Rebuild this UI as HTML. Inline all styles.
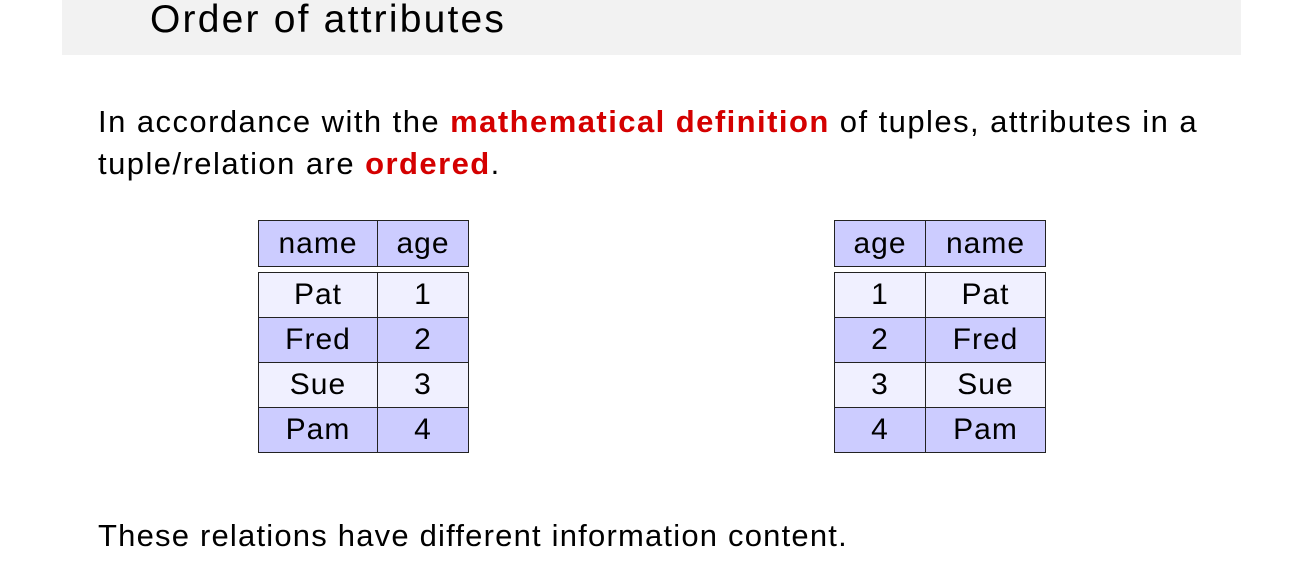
<!DOCTYPE html>
<html><head><meta charset="utf-8"><style>
body{margin:0;width:1296px;height:563px;background:#fff;position:relative;overflow:hidden;font-family:"Liberation Sans",sans-serif;color:#000}
.hdr{position:absolute;left:62px;top:0;width:1179px;height:55px;background:#f2f2f2}
.title{position:absolute;left:150px;top:-2px;font-size:39px;letter-spacing:2.2px;white-space:nowrap}
.t{position:absolute;left:98px;font-size:31px;letter-spacing:1.45px;white-space:nowrap}
.r{color:#d40000;font-weight:bold}
table{position:absolute;border-collapse:collapse;font-size:30px;letter-spacing:1px}
td{border:1.3px solid #222;text-align:center;padding:0;height:44px}
.h{background:#ccccff}
.l{background:#f0f0ff}
.d{background:#ccccff}
</style></head><body>
<div class="hdr"></div>
<div class="title">Order of attributes</div>
<div class="t" style="top:104px">In accordance with the <span class="r">mathematical definition</span> of tuples, attributes in a</div>
<div class="t" style="top:146px">tuple/relation are <span class="r">ordered</span>.</div>

<table style="left:258px;top:220px"><tr class="h"><td style="width:118px;height:45px">name</td><td style="width:90px">age</td></tr></table>
<table style="left:258px;top:272px">
<tr class="l"><td style="width:118px">Pat</td><td style="width:90px">1</td></tr>
<tr class="d"><td>Fred</td><td>2</td></tr>
<tr class="l"><td>Sue</td><td>3</td></tr>
<tr class="d"><td>Pam</td><td>4</td></tr>
</table>

<table style="left:834px;top:220px"><tr class="h"><td style="width:90px;height:45px">age</td><td style="width:119px">name</td></tr></table>
<table style="left:834px;top:272px">
<tr class="l"><td style="width:90px">1</td><td style="width:119px">Pat</td></tr>
<tr class="d"><td>2</td><td>Fred</td></tr>
<tr class="l"><td>3</td><td>Sue</td></tr>
<tr class="d"><td>4</td><td>Pam</td></tr>
</table>

<div class="t" style="top:518px;letter-spacing:1.2px">These relations have different information content.</div>
</body></html>
